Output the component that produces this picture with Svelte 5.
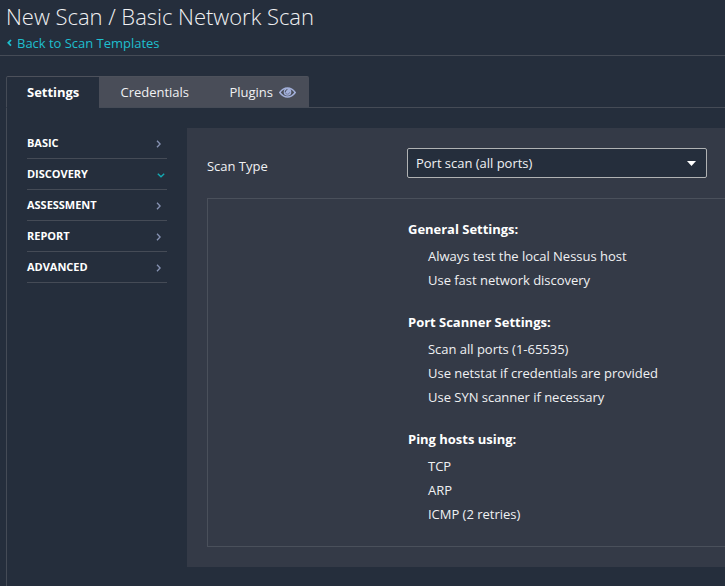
<script>
  const tabs = ['Settings', 'Credentials', 'Plugins'];
  const sections = ['BASIC', 'DISCOVERY', 'ASSESSMENT', 'REPORT', 'ADVANCED'];
  const groups = [
    { title: 'General Settings:', items: ['Always test the local Nessus host', 'Use fast network discovery'] },
    {
      title: 'Port Scanner Settings:',
      items: ['Scan all ports (1-65535)', 'Use netstat if credentials are provided', 'Use SYN scanner if necessary']
    },
    { title: 'Ping hosts using:', items: ['TCP', 'ARP', 'ICMP (2 retries)'] }
  ];
  let tab = $state('Settings');
  let section = $state('DISCOVERY');
</script>

<div class="page">
  <header>
    <h1>New Scan / Basic Network Scan</h1>
    <a href="#templates">
      <svg width="5" height="8" viewBox="0 0 5 8"><path d="M4 1 L1.3 3.8 L4 6.6" fill="none" stroke="currentColor" stroke-width="1.8" /></svg>
      Back to Scan Templates
    </a>
  </header>

  <nav class="tabs">
    {#each tabs as name}
      <button class="tab {name.toLowerCase()}" class:active={tab === name} onclick={() => (tab = name)}>
        {name}
        {#if name === 'Plugins'}
          <svg width="17" height="11" viewBox="0 0 17 11">
            <path d="M0.8 5.5 Q4 1 8.5 1 Q13 1 16.2 5.5 Q13 10 8.5 10 Q4 10 0.8 5.5 Z" fill="none" stroke="#a3b0da" stroke-width="1.5" />
            <circle cx="8.5" cy="4.9" r="3.8" fill="#a3b0da" />
            <path d="M6.2 5 Q6.3 2.8 8.4 2.5" fill="none" stroke="#494d58" stroke-width="1" />
            <path d="M6.2 5.2 Q6.6 7.2 8.5 7.2 Q10.4 7.2 10.8 5.2" fill="none" stroke="#697291" stroke-width=".8" />
          </svg>
        {/if}
      </button>
    {/each}
    <span class="rest"></span>
  </nav>

  <main>
    <ul class="menu">
      {#each sections as name}
        <li>
          <button class:open={section === name} onclick={() => (section = name)}>
            <span>{name}</span>
            {#if section === name}
              <svg class="down" width="8" height="5" viewBox="0 0 8 5"><path d="M.8 .8 L4 3.8 L7.2 .8" fill="none" stroke="#14a9b2" stroke-width="1.4" /></svg>
            {:else}
              <svg width="5" height="8" viewBox="0 0 5 8"><path d="M1 .7 L4.1 4 L1 7.3" fill="none" stroke="#8793b3" stroke-width="1.3" /></svg>
            {/if}
          </button>
        </li>
      {/each}
    </ul>

    <section class="panel">
      <div class="field">
        <span class="label">Scan Type</span>
        <button class="select">
          <span>Port scan (all ports)</span>
          <svg width="9" height="5" viewBox="0 0 9 5"><path d="M0 0 H9 L4.5 5 Z" fill="#fff" /></svg>
        </button>
      </div>
      <div class="summary">
        {#each groups as group}
          <div class="group">
            <h2>{group.title}</h2>
            <ul>
              {#each group.items as item}<li>{item}</li>{/each}
            </ul>
          </div>
        {/each}
      </div>
    </section>
  </main>
</div>

<style>
  :global(body) {
    margin: 0;
    overflow: hidden;
    background: #252e3c;
  }
  .page {
    height: 586px;
    display: flex;
    flex-direction: column;
    box-sizing: border-box;
    overflow: hidden;
    color: #f0f1f3;
    font: 13px/18px 'Open Sans', 'Noto Sans', sans-serif;
    letter-spacing: -0.02px;
  }
  header {
    height: 55px;
    flex: none;
    padding-left: 6px;
    border-bottom: 1px solid #454b56;
  }
  h1 {
    margin: 0;
    height: 34px;
    font-size: 22px;
    font-weight: 300;
    line-height: 32px;
    white-space: nowrap;
  }
  header a {
    display: flex;
    align-items: center;
    gap: 5px;
    height: 18px;
    padding-left: 1px;
    color: #1ebfce;
    text-decoration: none;
  }
  button {
    margin: 0;
    padding: 0;
    border: 0;
    background: none;
    color: inherit;
    font: inherit;
    letter-spacing: inherit;
    text-align: left;
  }
  .tabs {
    display: flex;
    flex: none;
    height: 32px;
    margin: 20px 0 0 6px;
  }
  .tab {
    display: flex;
    align-items: center;
    box-sizing: border-box;
    padding-bottom: 1px;
    border-top: 1px solid #4d515b;
    border-bottom: 1px solid #454b56;
    background: #494d58;
  }
  .tab.settings {
    width: 93px;
    padding-left: 20px;
    border-left: 1px solid #454b56;
    border-top-left-radius: 2px;
  }
  .tab.credentials {
    width: 110px;
    padding-left: 21.5px;
  }
  .tab.plugins {
    width: 100px;
    padding-left: 20.5px;
    gap: 6px;
    border-top-right-radius: 2px;
  }
  .tab svg {
    margin-top: 2px;
  }
  .tab.active {
    background: #252e3c;
    border-bottom-color: #252e3c;
    color: #fff;
    font-weight: 700;
  }
  .rest {
    flex: 1;
    border-bottom: 1px solid #454b56;
  }
  main {
    display: flex;
    flex: 1;
    align-items: flex-start;
    margin-left: 6px;
    padding: 20px 0 0 20px;
    border-left: 1px solid #454b56;
  }
  ul {
    margin: 0;
    padding: 0;
    list-style: none;
  }
  .menu {
    flex: none;
    width: 140px;
  }
  .menu button {
    display: flex;
    align-items: center;
    justify-content: space-between;
    box-sizing: border-box;
    width: 140px;
    height: 31px;
    padding-right: 6px;
    border-bottom: 1px solid #454b56;
    color: #fff;
    font-size: 11px;
    font-weight: 700;
  }
  .menu svg {
    margin-top: 2px;
  }
  .menu .open {
    padding-right: 2px;
  }
  .panel {
    flex: none;
    width: 560px;
    height: 439px;
    box-sizing: border-box;
    margin-left: 20px;
    padding: 20px 0 0 20px;
    background: #343a47;
  }
  .field {
    display: flex;
    height: 50px;
  }
  .label {
    width: 200px;
    padding-top: 9px;
    box-sizing: border-box;
  }
  .select {
    display: flex;
    align-items: center;
    justify-content: space-between;
    box-sizing: border-box;
    width: 300px;
    height: 30px;
    padding: 0 10px 0 8px;
    border: 1px solid #b0b2b3;
    border-radius: 2px;
    background: #252e3c;
  }
  .summary {
    height: 349px;
    box-sizing: border-box;
    padding: 18px 0 0 200px;
    border: 1px solid #4a505b;
    border-right: 0;
  }
  .group {
    margin-bottom: 18px;
  }
  h2 {
    margin: 0;
    height: 27px;
    color: #fff;
    font-size: 13px;
    font-weight: 700;
    line-height: 24px;
  }
  .group li {
    height: 24px;
    padding-left: 20px;
    line-height: 24px;
  }
</style>
